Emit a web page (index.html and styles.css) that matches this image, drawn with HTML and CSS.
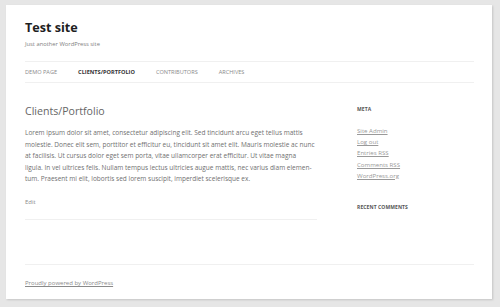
FILE: index.html
```html
<!DOCTYPE html>
<html lang="en">
<head>
<meta charset="utf-8">
<title>Test site</title>
<link rel="stylesheet" href="styles.css">
</head>
<body>
<div class="page">
  <header class="site-header">
    <h1 class="site-title">Test site</h1>
    <p class="site-desc">Just another WordPress site</p>
    <nav class="nav">
      <a href="#">Demo Page</a>
      <a href="#" class="current">Clients/Portfolio</a>
      <a href="#">Contributors</a>
      <a href="#">Archives</a>
    </nav>
  </header>
  <div class="main">
    <article class="entry">
      <h2 class="entry-title">Clients/Portfolio</h2>
      <p class="entry-text">Lorem ipsum dolor sit amet, consectetur adipiscing elit. Sed tincidunt arcu eget tellus mattis<br>
molestie. Donec elit sem, porttitor et efficitur eu, tincidunt sit amet elit. Mauris molestie ac nunc<br>
at facilisis. Ut cursus dolor eget sem porta, vitae ullamcorper erat efficitur. Ut vitae magna<br>
ligula. In vel ultrices felis. Nullam tempus lectus ultricies augue mattis, nec varius diam elemen-<br>
tum. Praesent mi elit, lobortis sed lorem suscipit, imperdiet scelerisque ex.</p>
      <a href="#" class="edit">Edit</a>
    </article>
    <aside class="sidebar">
      <h3 class="widget-title">Meta</h3>
      <ul class="widget-list">
        <li><a href="#">Site Admin</a></li>
        <li><a href="#">Log out</a></li>
        <li><a href="#">Entries RSS</a></li>
        <li><a href="#">Comments RSS</a></li>
        <li><a href="#">WordPress.org</a></li>
      </ul>
      <h3 class="widget-title recent">Recent Comments</h3>
    </aside>
  </div>
  <footer class="footer">
    <a href="#">Proudly powered by WordPress</a>
  </footer>
</div>
</body>
</html>
```
FILE: styles.css
```css
html, body {
  margin: 0;
  padding: 0;
}
body {
  background: #e6e6e6;
  font-family: "Open Sans", "Liberation Sans", sans-serif;
  width: 500px;
  height: 307px;
  overflow: hidden;
}
.page {
  margin: 5px 0 0 6px;
  width: 486px;
  height: 294px;
  background: #fff;
  box-shadow: 1px 1px 2px rgba(0,0,0,0.15);
  padding: 0 18px 0 19px;
  box-sizing: border-box;
  display: flex;
  flex-direction: column;
}
.site-header {
  padding-top: 14px;
}
.site-title {
  margin: 0;
  font-size: 12.6px;
  line-height: 18px;
  font-weight: 700;
  color: #1e1e1e;
}
.site-desc {
  margin: 2px 0 0;
  font-size: 5.8px;
  line-height: 10px;
  color: #808080;
}
.nav {
  margin-top: 12px;
  border-top: 1px solid #f0f0f0;
  border-bottom: 1px solid #f0f0f0;
  height: 20px;
  display: flex;
  align-items: center;
  gap: 21px;
}
.nav a {
  font-size: 5.6px;
  text-transform: uppercase;
  color: #8a8a8a;
  text-decoration: none;
  line-height: 10px;
}
.nav a.current {
  font-weight: 700;
  color: #333;
}
.main {
  flex: 1;
  display: flex;
  gap: 40px;
  border-bottom: 1px solid #f0f0f0;
}
.entry {
  width: 292px;
  flex: none;
  padding-top: 20px;
  align-self: flex-start;
  border-bottom: 1px solid #f0f0f0;
  padding-bottom: 10px;
}
.entry-title {
  margin: 0;
  font-size: 10.6px;
  line-height: 16px;
  font-weight: 400;
  color: #666;
}
.entry-text {
  margin: 8px -10px 0 0;
  font-size: 6.5px;
  line-height: 11.5px;
  color: #707070;
  white-space: nowrap;
}
.edit {
  display: block;
  margin-top: 12.5px;
  font-size: 6px;
  line-height: 11.5px;
  color: #8a8a8a;
  text-decoration: none;
}
.sidebar {
  flex: 1;
  padding-top: 22px;
}
.widget-title {
  margin: 0;
  font-size: 5px;
  line-height: 8px;
  font-weight: 700;
  text-transform: uppercase;
  color: #555;
  letter-spacing: 0.1px;
}
.widget-list {
  list-style: none;
  margin: 12px 0 0;
  padding: 0;
}
.widget-list li {
  font-size: 6.1px;
  line-height: 11.2px;
}
.widget-list a {
  color: #999;
  text-decoration: underline;
}
.widget-title.recent {
  margin-top: 22px;
}
.footer {
  height: 34px;
  padding-top: 13px;
  box-sizing: border-box;
}
.footer a {
  font-size: 6px;
  line-height: 10px;
  color: #8a8a8a;
  text-decoration: underline;
  display: block;
}
```
